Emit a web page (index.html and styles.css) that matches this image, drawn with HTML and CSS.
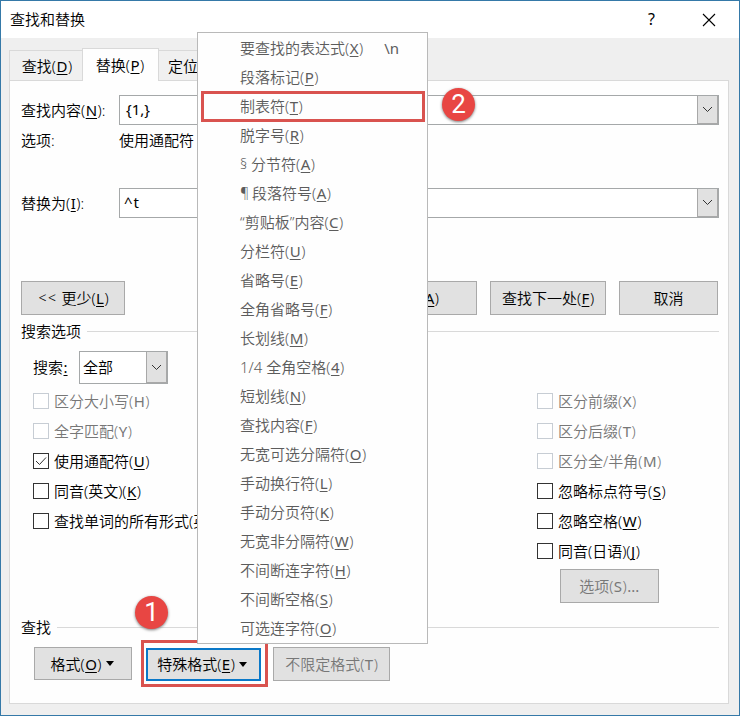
FILE: index.html
```
<!DOCTYPE html>
<html lang="zh-CN">
<head>
<meta charset="utf-8">
<title>查找和替换</title>
<link rel="stylesheet" href="styles.css">
</head>
<body>
<div class="dialog">
  <header class="titlebar">
    <span class="title">查找和替换</span>
    <span class="help">?</span>
    <svg class="close" width="14" height="14" viewBox="0 0 14 14"><path d="M1 1L13 13M13 1L1 13"/></svg>
  </header>
  <nav class="tabs">
    <div class="tab first">查找(<u>D</u>)</div>
    <div class="tab active">替换(<u>P</u>)</div>
    <div class="tab last">定位</div>
  </nav>
  <main class="panel">
    <div class="field">
      <label>查找内容(<u>N</u>):</label>
      <div class="combo"><span class="value find">{1,}</span><span class="drop"><svg width="11" height="7" viewBox="0 0 11 7"><path d="M1 1L5.500 5.500L10 1"/></svg></span></div>
    </div>
    <div class="field note"><label>选项:</label><span>使用通配符</span></div>
    <div class="field">
      <label>替换为(<u>I</u>):</label>
      <div class="combo"><span class="value repl">^t</span><span class="drop"><svg width="11" height="7" viewBox="0 0 11 7"><path d="M1 1L5.500 5.500L10 1"/></svg></span></div>
    </div>
    <div class="actions">
      <div class="btn less"><span class="lt">&lt;&lt;</span>更少(<u>L</u>)</div>
      <div class="btn all">(<u>A</u>)</div>
      <div class="btn next">查找下一处(<u>F</u>)</div>
      <div class="btn cancel">取消</div>
    </div>
    <div class="legend">搜索选项</div>
    <div class="search">
      <label>搜索<u>:</u></label>
      <div class="combo small"><span class="value">全部</span><span class="drop"><svg width="11" height="7" viewBox="0 0 11 7"><path d="M1 1L5.500 5.500L10 1"/></svg></span></div>
    </div>
    <div class="options">
      <div class="col left">
        <div class="check off"><i></i>区分大小写(<s>H</s>)</div>
        <div class="check off"><i></i>全字匹配(<s>Y</s>)</div>
        <div class="check"><i><svg width="14" height="14" viewBox="0 0 14 14"><path d="M2 7L5.500 10.500L12 3.500"/></svg></i>使用通配符(<u>U</u>)</div>
        <div class="check"><i></i>同音(英文)(<u>K</u>)</div>
        <div class="check"><i></i>查找单词的所有形式(英</div>
      </div>
      <div class="col">
        <div class="check off"><i></i>区分前缀(<s>X</s>)</div>
        <div class="check off"><i></i>区分后缀(<s>T</s>)</div>
        <div class="check off"><i></i>区分全/半角(<s>M</s>)</div>
        <div class="check"><i></i>忽略标点符号(<u>S</u>)</div>
        <div class="check"><i></i>忽略空格(<u>W</u>)</div>
        <div class="check"><i></i>同音(日语)(<u>J</u>)</div>
        <div class="btn more off">选项(<s>S</s>)<s>...</s></div>
      </div>
    </div>
    <div class="legend">查找</div>
    <div class="formats">
      <div class="btn format">格式(<u>O</u>)<b class="arrow"></b></div>
      <div class="mark"><div class="btn special">特殊格式(<u>E</u>)<b class="arrow"></b></div></div>
      <div class="btn nofmt off">不限定格式(<s>T</s>)</div>
    </div>
  </main>
  <div class="menu">
    <div class="item">要查找的表达式(<u>X</u>)<span class="key">\n</span></div>
    <div class="item">段落标记(<u>P</u>)</div>
    <div class="item marked">制表符(<u>T</u>)</div>
    <div class="item">脱字号(<u>R</u>)</div>
    <div class="item"><span class="sym">§</span>分节符(<u>A</u>)</div>
    <div class="item"><span class="sym para">¶</span>段落符号(<u>A</u>)</div>
    <div class="item"><span class="q">“</span>剪贴板<span class="q">”</span>内容(<u>C</u>)</div>
    <div class="item">分栏符(<u>U</u>)</div>
    <div class="item">省略号(<u>E</u>)</div>
    <div class="item">全角省略号(<u>F</u>)</div>
    <div class="item">长划线(<u>M</u>)</div>
    <div class="item">1/4 全角空格(<u>4</u>)</div>
    <div class="item">短划线(<u>N</u>)</div>
    <div class="item">查找内容(<u>F</u>)</div>
    <div class="item">无宽可选分隔符(<u>O</u>)</div>
    <div class="item">手动换行符(<u>L</u>)</div>
    <div class="item">手动分页符(<u>K</u>)</div>
    <div class="item">无宽非分隔符(<u>W</u>)</div>
    <div class="item">不间断连字符(<u>H</u>)</div>
    <div class="item">不间断空格(<u>S</u>)</div>
    <div class="item">可选连字符(<u>O</u>)</div>
  </div>
  <div class="badge one">1</div>
  <div class="badge two">2</div>
</div>
</body>
</html>
```
FILE: styles.css
```
* { box-sizing: border-box; }
body {
  margin: 0;
  font: 350 15px/20px "Noto Sans", "Noto Sans CJK SC", sans-serif;
  color: #000;
}
u, s { margin: 0 .5px; font-weight: 400; }
u { text-decoration-thickness: 1px; text-underline-offset: 2px; }
s { text-decoration: none; }
svg { display: block; fill: none; stroke: #333; stroke-width: 1; }
.dialog {
  position: relative;
  width: 740px;
  height: 716px;
  border: 1px solid #3579a8;
  background: #efefef;
  overflow: hidden;
  white-space: nowrap;
}
.titlebar { display: flex; align-items: center; height: 37px; padding: 0 23px 0 9px; background: #fff; }
.title { flex: 1; padding-bottom: 2px; }
.help { margin-right: 47px; padding-bottom: 2px; font-size: 16px; color: #000; font-weight: 400; }
.close { stroke: #000; stroke-width: 1.1; }
.tabs { display: flex; align-items: flex-end; height: 42px; padding-left: 8px; }
.tab { height: 30px; line-height: 30px; text-align: center; border: 1px solid #d9d9d9; border-bottom: 0; background: #f0f0f0; }
.tab.first { width: 73px; padding-left: 2px; border-right: 0; }
.tab.active { width: 77px; height: 33px; margin-bottom: -1px; padding-right: 1px; line-height: 32px; background: #fefefe; z-index: 1; }
.tab.last { width: 76px; padding-left: 9px; text-align: left; border-left: 0; }
.panel { width: 720px; height: 624px; margin-left: 8px; padding: 14px 9px 0 11px; border: 1px solid #d9d9d9; background: #fefefe; }
.field { display: flex; align-items: center; height: 30px; }
.field label { width: 98px; }
.field.note { margin-bottom: 33px; }
.combo { display: flex; flex: 1; height: 30px; border: 1px solid #a5a8a9; background: #fff; }
.value { flex: 1; padding-left: 6px; line-height: 26px; }
.value.find, .value.repl { font-weight: 400; }
.value.repl { padding-left: 4px; letter-spacing: 1px; }
.drop { display: flex; align-items: center; justify-content: center; width: 21px; background: #e1e1e1; border: 1px solid #a8a8a8; border-width: 0 1px 1px 1px; }
.actions { display: flex; height: 34px; margin-top: 63px; }
.btn { display: flex; align-items: center; justify-content: center; height: 34px; border: 1px solid #a9a9a9; background: #e1e1e1; }
.off { color: #777; }
.less { width: 104px; padding-left: 1px; }
.lt { margin-right: 4px; font-size: 14px; letter-spacing: 1.5px; }
.all { width: 104px; margin-left: auto; justify-content: flex-end; padding-right: 37px; }
.next { width: 116px; margin-left: 13px; }
.cancel { width: 99px; margin: 0 1px 0 13px; }
.legend { display: flex; align-items: center; gap: 6px; height: 20px; margin-top: 6px; }
.legend::after { content: ""; flex: 1; height: 1px; background: #d9d9d9; }
.search { display: flex; align-items: center; height: 33px; margin: 10px 0 0 12px; }
.search label { width: 46px; padding-bottom: 1px; }
.small { flex: none; width: 89px; height: 33px; }
.small .value { padding-left: 3px; line-height: 30px; }
.options { display: flex; height: 230px; margin: 2px 0 0 12px; }
.col.left { width: 504px; }
.check { display: flex; align-items: center; height: 30px; }
.check i { width: 16px; height: 16px; margin-right: 5px; border: 1px solid #333; background: #fff; }
.check.off i { border-color: #c7cdd4; }
.more { width: 99px; margin: 3px 0 0 23px; }
.options + .legend { margin-top: 1px; }
.formats { display: flex; align-items: center; height: 47px; margin: 3px 0 0 13px; }
.arrow { margin-left: 4px; border: 4px solid transparent; border-top: 5px solid #000; border-bottom: 0; }
.format { width: 98px; height: 33px; padding-right: 2px; }
.mark { width: 127px; height: 47px; margin: 0 5px 0 9px; padding: 5px 5px 4px 2px; border: 3px solid #d9534f; }
.special { width: 115px; height: 33px; padding: 0 3px 1px 0; border: 2px solid #0a78c8; }
.nofmt { width: 117px; }
.menu { position: absolute; left: 196px; top: 31px; width: 231px; height: 612px; padding-top: 1px; border: 1px solid #b9b9b9; background: #fefefe; }
.item { display: flex; align-items: center; height: 29px; padding: 0 0 2px 42px; color: #5c5c5c; }
.key { margin-left: 21px; font-weight: 400; }
.sym { width: 11px; font-size: 14px; }
.sym.para { width: 12px; }
.item.marked { height: 31px; margin: -1px 2px -1px 3px; padding-left: 36px; border: 3px solid #d9534f; }
.badge { position: absolute; width: 33px; height: 33px; border-radius: 50%; background: #e84643; color: #fff; font: 400 26px/32px Roboto, sans-serif; text-align: center; box-shadow: 0 1px 3px #777; }
.badge.one { left: 134px; top: 595px; }
.badge.two { left: 441px; top: 87px; }
```
